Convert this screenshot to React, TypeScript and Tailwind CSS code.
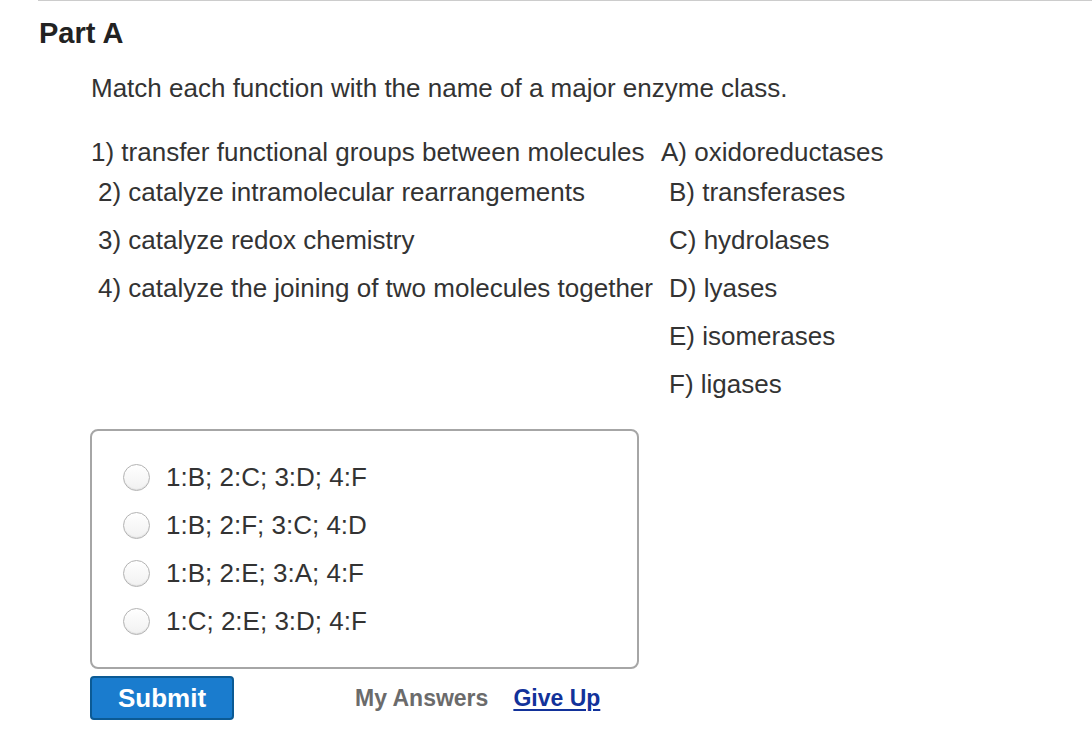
const statements = [
  { left: "2) catalyze intramolecular rearrangements", right: "B) transferases" },
  { left: "3) catalyze redox chemistry", right: "C) hydrolases" },
  { left: "4) catalyze the joining of two molecules together", right: "D) lyases" },
  { left: "", right: "E) isomerases" },
  { left: "", right: "F) ligases" },
];

const choices = ["1:B; 2:C; 3:D; 4:F", "1:B; 2:F; 3:C; 4:D", "1:B; 2:E; 3:A; 4:F", "1:C; 2:E; 3:D; 4:F"];

function Radio() {
  return (
    <span className="w-[27px] h-[27px] rounded-full border border-[#b3b3b3] bg-gradient-to-b from-white to-[#f1f1f1] shadow-[inset_0_-1px_1px_rgba(0,0,0,0.08)] shrink-0" />
  );
}

export default function App() {
  return (
    <div className="w-[1092px] h-[754px] bg-white text-[#333] font-['Liberation_Sans',Arial,sans-serif] overflow-hidden">
      <div className="ml-[38px] border-t border-[#cccccc]" />

      <h2 className="ml-[39px] mt-[16px] text-[29px] leading-[32px] font-bold text-[#222]">Part A</h2>

      <div className="ml-[91px]">
        <p className="mt-[24px] text-[26px] leading-[30px]">Match each function with the name of a major enzyme class.</p>

        <div className="mt-[34px] text-[26px] leading-[30px]">
          <div className="flex">
            <div className="w-[570px]">1) transfer functional groups between molecules</div>
            <div>A) oxidoreductases</div>
          </div>
          <div className="mt-[10px] flex flex-col gap-[18px]">
            {statements.map((s, i) => (
              <div key={i} className="flex h-[30px]">
                <div className="w-[578px] pl-[7px]">{s.left}</div>
                <div>{s.right}</div>
              </div>
            ))}
          </div>
        </div>

        <div className="-ml-[1px] mt-[30px] w-[549px] h-[240px] border-2 border-[#a6a6a6] rounded-[8px] pl-[31px] pt-[22px]">
          {choices.map((c) => (
            <label key={c} className="flex items-center gap-[16px] h-[48px] text-[26px]">
              <Radio />
              <span>{c}</span>
            </label>
          ))}
        </div>

        <div className="-ml-[1px] mt-[7px] flex items-center">
          <button className="w-[144px] h-[44px] rounded-[4px] bg-[#1a7cce] border-2 border-[#0b5a94] text-white text-[26px] font-bold">
            Submit
          </button>
          <span className="ml-[121px] text-[23px] font-bold text-[#6b6b6b]">My Answers</span>
          <a className="ml-[25px] text-[23px] font-bold text-[#12329a] underline underline-offset-[3px] decoration-2">Give Up</a>
        </div>
      </div>
    </div>
  );
}
